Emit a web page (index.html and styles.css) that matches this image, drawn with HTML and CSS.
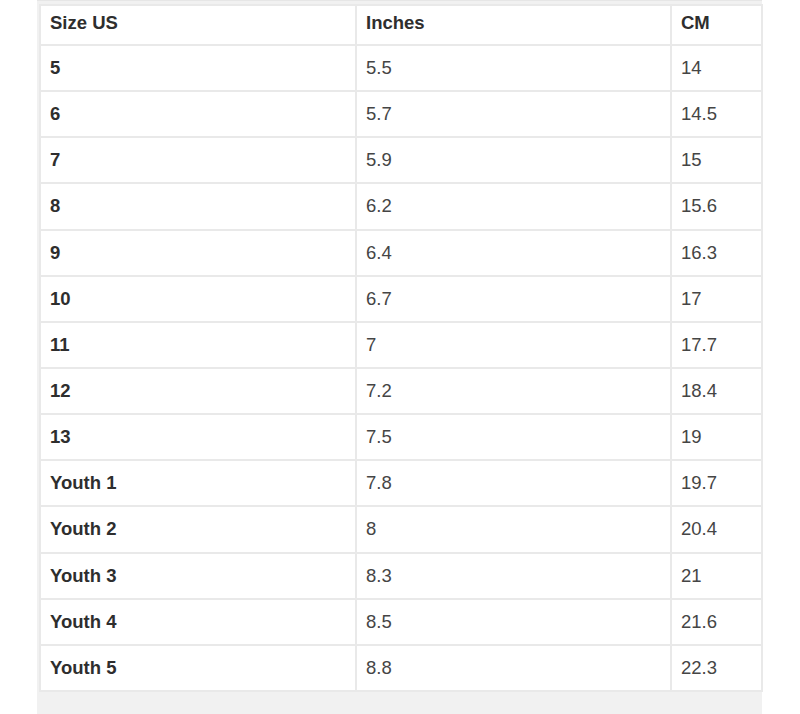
FILE: index.html
```html
<!DOCTYPE html>
<html>
<head>
<meta charset="utf-8">
<link rel="stylesheet" href="styles.css">
</head>
<body>
<div class="wrap">
<table class="chart">
<colgroup><col class="c1"><col class="c2"><col class="c3"></colgroup>
<tr class="head"><td>Size US</td><td>Inches</td><td>CM</td></tr>
<tr><td>5</td><td>5.5</td><td>14</td></tr>
<tr><td>6</td><td>5.7</td><td>14.5</td></tr>
<tr><td>7</td><td>5.9</td><td>15</td></tr>
<tr><td>8</td><td>6.2</td><td>15.6</td></tr>
<tr><td>9</td><td>6.4</td><td>16.3</td></tr>
<tr><td>10</td><td>6.7</td><td>17</td></tr>
<tr><td>11</td><td>7</td><td>17.7</td></tr>
<tr><td>12</td><td>7.2</td><td>18.4</td></tr>
<tr><td>13</td><td>7.5</td><td>19</td></tr>
<tr><td>Youth 1</td><td>7.8</td><td>19.7</td></tr>
<tr><td>Youth 2</td><td>8</td><td>20.4</td></tr>
<tr><td>Youth 3</td><td>8.3</td><td>21</td></tr>
<tr><td>Youth 4</td><td>8.5</td><td>21.6</td></tr>
<tr><td>Youth 5</td><td>8.8</td><td>22.3</td></tr>
</table>
</div>
</body>
</html>
```
FILE: styles.css
```css
html, body {
  margin: 0;
  padding: 0;
  background: #ffffff;
}
body {
  font-family: "Liberation Sans", Arial, sans-serif;
  width: 800px;
  height: 714px;
  overflow: hidden;
}
.wrap {
  margin-left: 37px;
  width: 725px;
  height: 714px;
  background: #f1f1f1;
  padding-top: 3px;
  box-sizing: border-box;
  border-top: 1px solid #e6e6e6;
}
.chart {
  margin-left: 2px;
  width: 722px;
  border-collapse: collapse;
  background: #ffffff;
  table-layout: fixed;
}
.c1 { width: 316px; }
.c2 { width: 315px; }
.c3 { width: 91px; }
.chart td {
  height: 44.15px;
  padding: 0 0 0 9px;
  border: 2px solid #e9e9e9;
  font-size: 18.5px;
  color: #454545;
  vertical-align: middle;
  line-height: 20px;
}
.chart .head td {
  height: 34px;
  padding-bottom: 4px;
}
.chart td:first-child,
.chart .head td {
  font-weight: bold;
  color: #2e2e2e;
}
```
